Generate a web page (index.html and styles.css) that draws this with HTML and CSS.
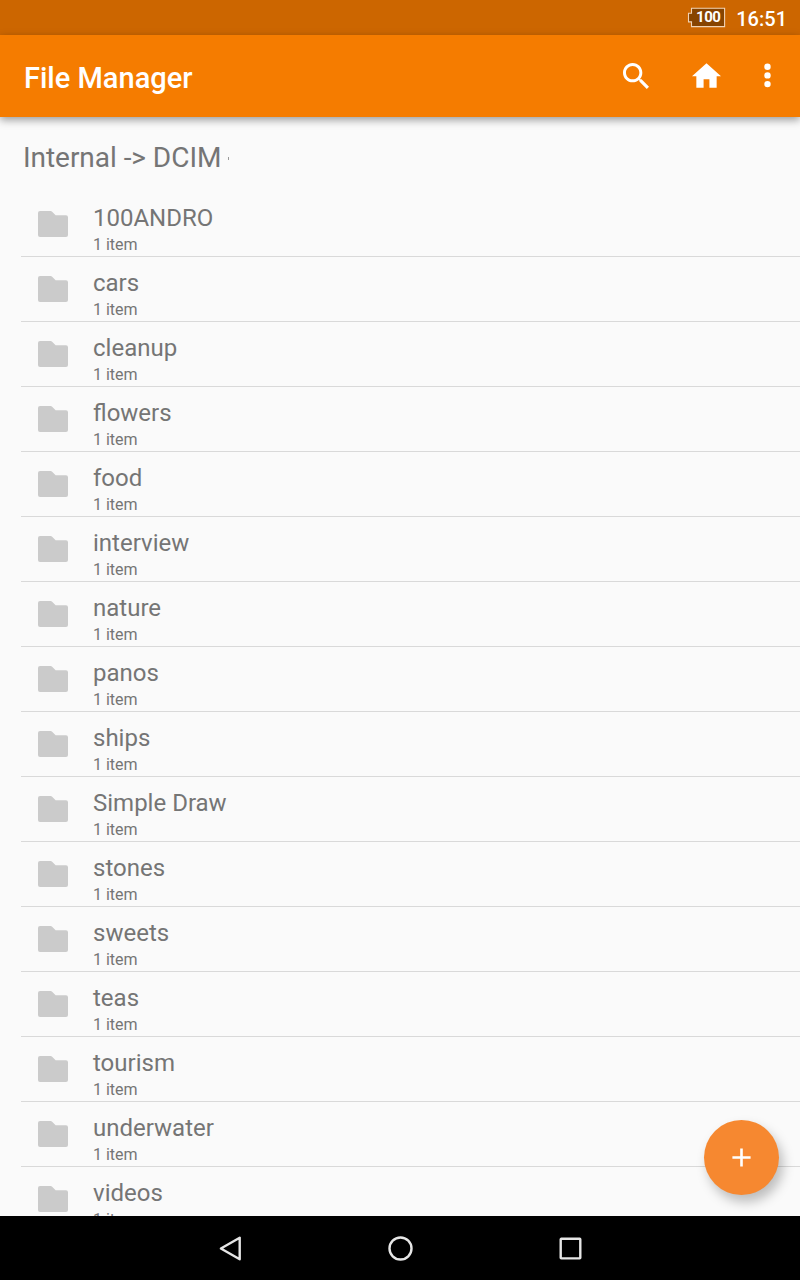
FILE: index.html
```html
<!DOCTYPE html>
<html lang="en">
<head>
<meta charset="utf-8">
<title>File Manager</title>
<link rel="stylesheet" href="styles.css">
</head>
<body>
<svg width="0" height="0" class="defs">
  <symbol id="folder" viewBox="0 0 30 26"><path d="M2 0H12.6Q13.5 0 14.1.7L17.6 4.3H28Q30 4.3 30 6.3V24Q30 26 28 26H2Q0 26 0 24V2Q0 0 2 0Z"/></symbol>
</svg>
<div class="screen">
  <div class="status">
    <div class="battery">
      <svg width="39" height="21" viewBox="0 0 39 21"><path d="M4.5 1.2H37.6V19.6H4.5V14.9H1.5V6.2H4.5Z" fill="#874400" stroke="#f0d3b5" stroke-width="1.1"/></svg>
      <span class="level">100</span>
    </div>
    <span class="clock">16:51</span>
  </div>
  <header class="bar">
    <h1 class="title">File Manager</h1>
    <svg class="search" viewBox="3 3 17.49 17.49"><path d="M15.5 14h-.79l-.28-.27C15.41 12.59 16 11.11 16 9.5 16 5.91 13.09 3 9.5 3S3 5.91 3 9.5 5.91 16 9.5 16c1.61 0 3.09-.59 4.23-1.57l.27.28v.79l5 4.99L20.49 19l-4.99-5zm-6 0C7.01 14 5 11.99 5 9.5S7.01 5 9.5 5 14 7.01 14 9.5 11.99 14 9.5 14z"/></svg>
    <svg class="home" viewBox="2 3 20 17"><path d="M10 20v-6h4v6h5v-8h3L12 3 2 12h3v8z"/></svg>
    <svg class="more" viewBox="0 0 7 25"><circle cx="3.5" cy="3.7" r="3.2"/><circle cx="3.5" cy="12.4" r="3.2"/><circle cx="3.5" cy="21.1" r="3.2"/></svg>
  </header>
  <main class="content">
    <div class="crumbs">Internal -&gt; DCIM<i class="tip"></i></div>
    <ul class="list" id="list"></ul>
  </main>
  <button class="fab" aria-label="Add"><svg width="19" height="19" viewBox="0 0 19 19"><path d="M9.5.4V18.6M.4 9.5H18.6" stroke="#fff" stroke-width="2.6"/></svg></button>
  <nav class="nav">
    <svg width="24" height="28" viewBox="0 0 24 28"><path d="M3.9 14.5 22.7 3.7V25.3Z"/></svg>
    <svg width="28" height="28" viewBox="0 0 28 28"><circle cx="14.5" cy="14.5" r="11"/></svg>
    <svg width="24" height="28" viewBox="0 0 24 28"><rect x="1.7" y="4.8" width="19.6" height="19.6" rx=".6"/></svg>
  </nav>
</div>
<script src="app.js"></script>
</body>
</html>
```
FILE: styles.css
```css
* { box-sizing: border-box; }
body { margin: 0; font-family: Roboto, "Noto Sans", sans-serif; background: #fafafa; }
.defs { position: absolute; }
.screen { position: relative; width: 800px; height: 1280px; display: flex; flex-direction: column; overflow: hidden; color: #757575; }
.status { height: 35px; flex: none; background: #cc6600; color: #fff; display: flex; justify-content: flex-end; align-items: center; padding-right: 13px; gap: 10px; }
.battery { position: relative; width: 39px; height: 21px; }
.battery svg { display: block; }
.level { position: absolute; left: 8px; top: 0; width: 26px; text-align: center; font-size: 15px; line-height: 20px; font-weight: 700; letter-spacing: -0.4px; }
.clock { font-size: 20px; line-height: 24px; font-weight: 500; padding-top: 2px; }
.bar { height: 82px; flex: none; background: #f57c00; display: flex; align-items: center; padding: 0 29px 0 24px; box-shadow: 0 3px 8px rgba(0,0,0,.38); z-index: 1; }
.title { margin: 3px auto 0 0; font-size: 29px; line-height: 34px; font-weight: 500; color: #fff; }
.bar svg { fill: #fff; margin-bottom: 1px; }
.bar .search { width: 26px; height: 26px; margin-right: 43px; }
.bar .home { width: 29px; height: 25px; margin-right: 43px; }
.bar .more { width: 7px; height: 25px; }
.content { flex: 1; min-height: 0; overflow: hidden; }
.crumbs { height: 75px; margin-left: 23px; padding-top: 24px; font-size: 28px; line-height: 33px; letter-spacing: -0.04px; white-space: nowrap; }
.tip { display: inline-block; width: 1px; height: 3px; margin-left: 7px; vertical-align: 7px; background: #9a9a9a; }
.list { list-style: none; margin: 0; padding: 0 0 0 21px; }
.row { height: 65px; display: flex; align-items: flex-start; gap: 25px; padding: 10px 0 0 17px; border-bottom: 1px solid #d9d9d9; }
.folder { width: 30px; height: 26px; margin-top: 9px; fill: #cbcbcb; }
.name { font-size: 24px; line-height: 32px; }
.count { font-size: 16px; line-height: 20px; padding-top: 1px; }
.fab { position: absolute; left: 704px; top: 1120px; width: 75px; height: 75px; border: 0; padding: 0; border-radius: 50%; background: #f68830; display: flex; align-items: center; justify-content: center; box-shadow: 4px 7px 12px rgba(0,0,0,.25); }
.nav { height: 64px; flex: none; background: #000; display: flex; justify-content: center; align-items: center; gap: 145px; z-index: 1; }
.nav svg { fill: none; stroke: #e6e6e6; stroke-width: 2.4; stroke-linejoin: round; }
```
FILE: app.js
```js
const folders = ["100ANDRO", "cars", "cleanup", "flowers", "food", "interview", "nature", "panos",
  "ships", "Simple Draw", "stones", "sweets", "teas", "tourism", "underwater", "videos"];
document.getElementById("list").innerHTML = folders.map(name =>
  `<li class="row"><svg class="folder"><use href="#folder"/></svg><div><div class="name">${name}</div><div class="count">1 item</div></div></li>`
).join("");
```
